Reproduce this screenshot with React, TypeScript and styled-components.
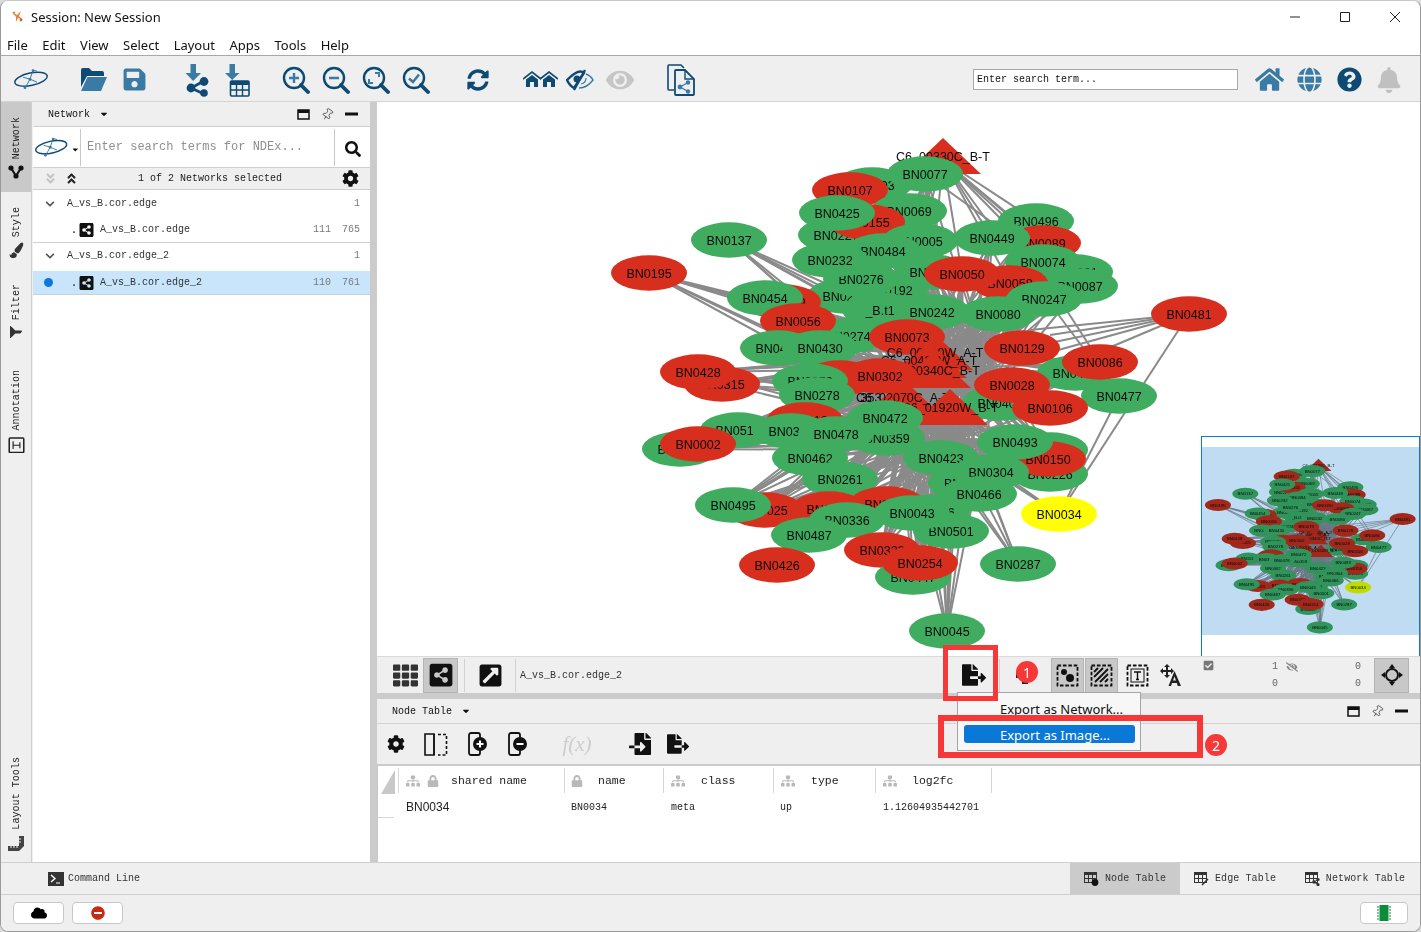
import React from 'react';
import styled, { createGlobalStyle } from 'styled-components';
import {
  FaSave, FaHome, FaGlobe, FaQuestionCircle, FaBell, FaEyeSlash, FaEye, FaSearch, FaCog,
  FaShareAltSquare, FaSyncAlt, FaFileExport, FaFileImport, FaTh, FaExternalLinkSquareAlt,
  FaLock, FaSitemap, FaCloud, FaMinusCircle, FaCheckSquare, FaFilter, FaPaintBrush,
  FaCaretDown, FaChevronDown, FaAngleDoubleDown, FaAngleDoubleUp,
} from 'react-icons/fa';
import { Pin } from 'lucide-react';

const MONO = `"Liberation Mono", "DejaVu Sans Mono", monospace`;
const UI = `"Noto Sans", "Open Sans", sans-serif`;
const SANS = `"Liberation Sans", Arial, sans-serif`;
const DARK = '#0e4a73';
const MID = '#3a7ba6';

const Global = createGlobalStyle`
  html, body { margin: 0; padding: 0; background: #dcdcdc; }
  #root { width: 1421px; height: 932px; }
  * { box-sizing: border-box; }
`;

const Win = styled.div`
  width: 1421px; height: 932px; display: flex; flex-direction: column; overflow: hidden; position: relative;
  background: #efefef; border: 1px solid #9a9a9a; border-top-color: #c8c8c8; border-radius: 8px;
`;
const TitleBar = styled.div`
  height: 32px; flex: none; background: #fff; display: flex; align-items: center; padding-left: 10px; padding-bottom: 1px;
  font: 13px ${UI}; color: #111;
`;
const TitleText = styled.span` margin-left: 7px; `;
const WinCtl = styled.div` margin-left: auto; display: flex; `;
const WinBtn = styled.div` width: 50px; height: 31px; display: flex; align-items: center; justify-content: center; `;
const MenuBar = styled.div`
  height: 23px; flex: none; background: #fff; border-bottom: 1px solid #a8a8a8; display: flex; align-items: center;
  padding-left: 6px; padding-top: 1px; gap: 14.5px; font: 13px ${UI}; color: #111;
`;
const Toolbar = styled.div`
  height: 46px; flex: none; background: #efefef; border-bottom: 1px solid #d4d4d4; display: flex; align-items: center;
  padding-left: 12px; padding-right: 11px; padding-top: 2px;
`;
const ToolGroup = styled.div<{ $ml: number }>` display: flex; margin-left: ${p => p.$ml}px; `;
const Slot = styled.div<{ $w?: number; $c?: string }>`
  width: ${p => p.$w ?? 40}px; height: 40px; display: flex; align-items: center; justify-content: center; color: ${p => p.$c ?? DARK};
`;
const SearchBox = styled.div`
  margin-left: auto; width: 265px; height: 21px; margin-bottom: 1px; background: #fff; border: 1px solid #a9a9a9; font: 10px ${MONO}; color: #111;
  display: flex; align-items: center; padding-left: 3px; margin-right: 11px;
`;
const Main = styled.div` flex: 1; display: flex; min-height: 0; `;
const TabStrip = styled.div`
  width: 31px; flex: none; background: #efefef; border-right: 1px solid #cfcfcf; display: flex; flex-direction: column;
`;
const SideTab = styled.div<{ $active?: boolean; $h: number; $pt: number; $auto?: boolean }>`
  height: ${p => p.$h}px; padding-top: ${p => p.$pt}px; flex: none; display: flex; flex-direction: column; align-items: center; gap: 6px;
  background: ${p => (p.$active ? '#c9c9c9' : 'transparent')}; margin-top: ${p => (p.$auto ? 'auto' : 0)};
`;
const SideLabel = styled.span`
  writing-mode: vertical-rl; transform: rotate(180deg); font: 10px ${MONO}; color: #222; white-space: pre; letter-spacing: 0.05px;
`;
const NetPanel = styled.div`
  width: 337px; flex: none; margin-left: 1px; background: #fff; display: flex; flex-direction: column;
`;
const PanelHead = styled.div`
  height: 25px; flex: none; background: #efefef; border-bottom: 1px solid #cfcfcf; display: flex; align-items: center;
  padding-left: 15px; padding-right: 7px; font: 10px ${MONO}; color: #111;
`;
const Caret = styled.span` margin-left: 9px; display: inline-flex; `;
const HeadIcons = styled.div` margin-left: auto; display: flex; align-items: center; `;
const HeadIcon = styled.div` width: 24px; display: flex; justify-content: center; align-items: center; `;
const SearchRow = styled.div`
  height: 41px; flex: none; background: #fff; display: flex; align-items: center; border-bottom: 1px solid #cfcfcf;
`;
const LogoCell = styled.div`
  width: 48px; height: 37px; flex: none; border-right: 1px solid #c8c8c8; display: flex; align-items: center; padding-left: 1px; gap: 3px;
`;
const NdexInput = styled.div`
  flex: 1; height: 37px; display: flex; align-items: center; padding-left: 6px; padding-bottom: 1px; font: 12px ${MONO}; color: #8f8f8f;
`;
const SearchBtn = styled.div`
  width: 36px; height: 37px; flex: none; border-left: 1px solid #c8c8c8; display: flex; align-items: center; justify-content: center; padding-top: 3px;
`;
const SelectRow = styled.div`
  height: 22px; flex: none; background: #efefef; border-bottom: 1px solid #cfcfcf; display: flex; align-items: center; position: relative;
  padding-left: 11px; gap: 8px; font: 10px ${MONO}; color: #222;
`;
const SelectText = styled.span` margin-left: 52px; `;
const GearSlot = styled.span` margin-left: auto; margin-right: 11px; display: inline-flex; `;
const TreeRow = styled.div<{ $h: number; $line?: boolean; $sel?: boolean; $pb?: number }>`
  height: ${p => p.$h}px; flex: none; display: flex; align-items: center; font: 10px ${MONO}; color: #333; padding-bottom: ${p => p.$pb ?? 0}px;
  background: ${p => (p.$sel ? '#c9e5fc' : '#fff')}; border-bottom: ${p => (p.$line ? '1px solid #cfcfcf' : 'none')};
`;
const Chevron = styled.span` width: 34px; padding-left: 12px; flex: none; display: inline-flex; color: #555; `;
const Dot = styled.span<{ $on?: boolean }>`
  width: 9px; height: 9px; margin-left: 11px; border-radius: 50%; background: ${p => (p.$on ? '#0a78dd' : 'transparent')}; flex: none;
`;
const Bullet = styled.span` margin-left: 18px; width: 8px; flex: none; font-weight: bold; padding-top: 2px; `;
const NetIcon = styled.span` width: 15px; height: 15px; margin-right: 6px; flex: none; display: inline-flex; `;
const Count = styled.span<{ $w: number }>` width: ${p => p.$w}px; text-align: right; flex: none; color: #7a7a7a; `;
const Spacer = styled.span` flex: 1; `;
const RightPad = styled.span` flex: none; width: 10px; `;
const Sash = styled.div<{ $w?: number; $h?: number }>`
  flex: none; background: #cbcbcb; width: ${p => (p.$w ? `${p.$w}px` : 'auto')}; height: ${p => (p.$h ? `${p.$h}px` : 'auto')};
`;
const Right = styled.div` flex: 1; min-width: 0; display: flex; flex-direction: column; `;
const Canvas = styled.div` height: 554px; flex: none; background: #fff; position: relative; `;
const NetSvg = styled.svg` display: block; width: 100%; height: 100%; `;
const Minimap = styled.svg`
  position: absolute; right: 0; top: 334px; width: 219px; height: 220px; background: #fff; border: 1px solid #0b7ad8; border-bottom: none;
`;
const NetBar = styled.div`
  height: 37px; flex: none; background: #efefef; border-top: 1px solid #dadada; display: flex; align-items: center; padding-left: 11px; font: 10px ${MONO}; color: #333;
`;
const BarBtn = styled.div<{ $w?: number; $active?: boolean; $ml?: number }>`
  width: ${p => p.$w ?? 34}px; height: 35px; flex: none; margin-left: ${p => p.$ml ?? 0}px; display: flex; align-items: center; justify-content: center; color: #111;
  background: ${p => (p.$active ? '#c8c8c8' : 'transparent')}; border: 1px solid ${p => (p.$active ? '#b4b4b4' : 'transparent')};
`;
const Sep = styled.div<{ $ml?: number }>` width: 1px; height: 33px; background: #d2d2d2; flex: none; margin-left: ${p => p.$ml ?? 0}px; `;
const NetTitle = styled.span` margin-left: 4px; `;
const Stats = styled.div`
  display: grid; grid-template-columns: 60px 20px 63px; grid-auto-rows: 17px; margin-left: 3px; width: 143px; font: 10px ${MONO}; color: #666; align-items: center;
`;
const StatCell = styled.span` text-align: right; display: flex; justify-content: flex-end; `;
const CheckCell = styled.div` margin-left: 13px; width: 12px; align-self: flex-start; padding-top: 3px; color: #777; display: flex; `;
const TableHead = styled.div`
  height: 25px; flex: none; border-bottom: 1px solid #d2d2d2; background: #efefef; display: flex; align-items: center; padding-left: 15px; padding-right: 7px;
  font: 10px ${MONO}; color: #111;
`;
const TableTools = styled.div` height: 40px; flex: none; background: #efefef; display: flex; align-items: center; padding-left: 7px; `;
const Tool = styled.div<{ $w?: number; $ml?: number }>`
  width: ${p => p.$w ?? 24}px; margin-left: ${p => p.$ml ?? 0}px; display: flex; justify-content: center; align-items: center; color: #111; flex: none;
`;
const Fx = styled.span` font: italic 21px "Liberation Serif", serif; color: #cdcdcd; `;
const Grid = styled.div`
  flex: 1; background: #fff; display: grid; grid-template-columns: 20px 166px 99px 110px 102px 116px 1fr; grid-template-rows: 28px 28px 1fr; min-height: 0;
  border-left: 1px solid #c8c8c8;
`;
const Corner = styled.div` display: flex; align-items: flex-end; padding: 2px 0 0 3px; `;
const Th = styled.div<{ $pad: number; $gap: number }>`
  border-left: 1px solid #d6d6d6; margin-top: 2px; height: 25px; display: flex; align-items: center; padding-left: ${p => p.$pad}px; gap: 4px;
  font: 11.5px ${MONO}; color: #222;
  & > span { margin-left: ${p => p.$gap}px; }
  & svg { color: #b9b9b9; }
`;
const Td = styled.div<{ $sans?: boolean; $pad?: number }>`
  display: flex; align-items: center; padding-left: ${p => p.$pad ?? 8}px; color: #222; padding-bottom: 2px;
  font: ${p => (p.$sans ? `12px ${SANS}` : `10px ${MONO}`)};
`;
const RowHead = styled.div` border-bottom: 1px solid #d8d8d8; margin: 0 4px 4px 0; `;
const Filler = styled.div` grid-column: 1 / -1; `;
const BottomBar = styled.div`
  height: 33px; flex: none; border-top: 1px solid #cfcfcf; background: #efefef; border-bottom: 1px solid #cfcfcf; display: flex; align-items: stretch; padding-left: 47px;
  font: 10px ${MONO}; color: #333;
`;
const CmdLine = styled.div` display: flex; align-items: center; gap: 4px; `;
const BottomTab = styled.div<{ $w: number; $active?: boolean; $ml?: string }>`
  width: ${p => p.$w}px; margin-left: ${p => p.$ml ?? 0}; flex: none; display: flex; align-items: center; justify-content: center; gap: 6px; letter-spacing: 0.1px;
  background: ${p => (p.$active ? '#cbcbcb' : 'transparent')};
`;
const StatusBar = styled.div` height: 36px; flex: none; display: flex; align-items: center; padding: 0 12px; gap: 8px; background: #efefef; padding-bottom: 1px; `;
const StatusBtn = styled.div<{ $auto?: boolean; $w?: number }>`
  width: ${p => p.$w ?? 51}px; height: 22px; background: #fff; border: 1px solid #c8c8c8; border-radius: 4px; display: flex; align-items: center; justify-content: center;
  margin-left: ${p => (p.$auto ? 'auto' : 0)};
`;
const Menu = styled.div`
  position: absolute; left: 956px; top: 691px; width: 184px; height: 59px; background: #f7f7f7; border: 1px solid #a5a5a5;
  padding: 5px 5px 0 6px; font: 13px ${UI}; color: #111;
`;
const MenuItem = styled.div<{ $sel?: boolean }>`
  height: ${p => (p.$sel ? 18 : 24)}px; margin-top: ${p => (p.$sel ? 3 : 0)}px; display: flex; align-items: center; padding-left: 36px; border-radius: 3px;
  padding-bottom: ${p => (p.$sel ? 0 : 3)}px; padding-top: ${p => (p.$sel ? 1 : 0)}px;
  background: ${p => (p.$sel ? '#0a78d7' : 'transparent')}; color: ${p => (p.$sel ? '#fff' : '#111')};
`;
const RedBox = styled.div<{ $l: number; $t: number; $w: number; $h: number; $b: number }>`
  position: absolute; left: ${p => p.$l}px; top: ${p => p.$t}px; width: ${p => p.$w}px; height: ${p => p.$h}px; border: ${p => p.$b}px solid #f73838;
`;
const Badge = styled.div<{ $l: number; $t: number }>`
  position: absolute; left: ${p => p.$l}px; top: ${p => p.$t}px; width: 22px; height: 22px; border-radius: 50%; background: #f73838; color: #fff;
  font: 14px ${UI}; display: flex; align-items: center; justify-content: center;
`;

/* ---------- drawn icons ---------- */
const Logo = ({ w = 36 }: { w?: number }) => (
  <svg width={w} height={w * 0.62} viewBox="0 0 36 22" fill="none">
    <ellipse cx="18" cy="11" rx="16.5" ry="6.2" transform="rotate(-12 18 11)" stroke={DARK} strokeWidth="1.5" />
    <path d="M20 2 L17 11 L12 20 M17 11 L24 14 M17 11 L10 9 M20 2 L24 3" stroke={MID} strokeWidth="1" />
    <circle cx="20" cy="2.5" r="1.4" fill={MID} /><circle cx="12" cy="19.5" r="1.4" fill={MID} /><circle cx="17" cy="11" r="1.5" fill={MID} />
  </svg>
);
const AppMark = () => (
  <svg width="13" height="13" viewBox="0 0 13 13">
    <path d="M1 2 L6 5 L10 1 L8 6 L12 10 L7 8 L5 12 L5 7 Z" fill="#e8843c" />
    <circle cx="3" cy="3" r="1.4" fill="#c9a06a" /><circle cx="10" cy="10" r="1.4" fill="#d65c3a" />
  </svg>
);
const Folder = () => (
  <svg width="28" height="25" viewBox="0 0 28 25">
    <path d="M1 3 Q1 1 3 1 H9 L12 4 H22 Q24 4 24 6 V9 H7 L1 20 Z" fill={DARK} />
    <path d="M7.5 10 H27 L21 24 H1 Z" fill={MID} />
  </svg>
);
const Mag = ({ kind }: { kind: 'plus' | 'minus' | 'fit' | 'check' }) => (
  <svg width="28" height="28" viewBox="0 0 28 28" fill="none">
    <circle cx="12" cy="12" r="10" stroke={DARK} strokeWidth="2.4" fill="none" />
    <path d="M19 19 L26 26" stroke={DARK} strokeWidth="3.8" strokeLinecap="round" />
    {kind === 'plus' && <path d="M12 7 V17 M7 12 H17" stroke={MID} strokeWidth="2.4" />}
    {kind === 'minus' && <path d="M7 12 H17" stroke={MID} strokeWidth="2.4" />}
    {kind === 'fit' && <path d="M13 7 H17 V11 M11 17 H7 V13" stroke={MID} strokeWidth="2" />}
    {kind === 'check' && <path d="M7 12.5 L11 16 L17 8.5" stroke={MID} strokeWidth="2.6" />}
  </svg>
);
const DownShare = () => (
  <svg width="26" height="34" viewBox="0 0 26 34">
    <path d="M6.5 1 H12 V10 H17 L9.2 18 L1.5 10 H6.5 Z" fill={MID} />
    <path d="M7 25 L20 18 M7 25 L20 31" stroke={DARK} strokeWidth="2.6" />
    <circle cx="7" cy="25" r="4.4" fill={DARK} /><circle cx="20" cy="18.5" r="4.4" fill={DARK} /><circle cx="20" cy="30" r="3.8" fill={DARK} />
  </svg>
);
const DownTable = () => (
  <svg width="26" height="34" viewBox="0 0 26 34">
    <path d="M5.5 1 H11 V10 H15.5 L8.2 17 L1 10 H5.5 Z" fill={MID} />
    <rect x="6.5" y="18" width="18.5" height="15" rx="1" fill="#efefef" stroke={DARK} strokeWidth="1.6" />
    <rect x="6.5" y="18" width="18.5" height="4" fill={DARK} />
    <path d="M7 27 H25 M12.5 22 V33 M18.5 22 V33" stroke={DARK} strokeWidth="1.4" />
  </svg>
);
const Homes = () => (
  <svg width="35" height="17" viewBox="0 0 35 17">
    {[0, 17].map(x => (
      <g key={x} transform={`translate(${x} 0)`}>
        <path d="M0 8 L9 1 L18 8" fill="none" stroke={DARK} strokeWidth="1.6" />
        <path d="M3 8.5 L9 4 L15 8.5 V16 H11 V11 H7 V16 H3 Z" fill={DARK} />
      </g>
    ))}
  </svg>
);
const EyeSlashIcon = () => (
  <svg width="28" height="22" viewBox="0 0 28 22" fill="none">
    <path d="M1 11 Q13 -1 18 4 L8 19 Q4 17 1 11 Z" stroke={DARK} strokeWidth="2.4" fill="none" />
    <circle cx="11" cy="10" r="3.5" fill={DARK} />
    <path d="M19 1 L8 21" stroke={DARK} strokeWidth="2.4" />
    <path d="M20 5 Q25 7 27 11 Q21 19 13 19" stroke={MID} strokeWidth="1.4" /><path d="M20 9 Q20 14 15 15" stroke={MID} strokeWidth="1.2" />
  </svg>
);
const DocsShare = () => (
  <svg width="28" height="32" viewBox="0 0 28 32" fill="none">
    <path d="M7 26 H2 Q1 26 1 25 V2 Q1 1 2 1 H14 L17 4" stroke={DARK} strokeWidth="1.6" />
    <path d="M8 7 Q8 6 9 6 H18 L27 15 V30 Q27 31 26 31 H9 Q8 31 8 30 Z" stroke={DARK} strokeWidth="1.8" fill="#efefef" />
    <path d="M18 6 V15 H27" stroke={DARK} strokeWidth="1.4" />
    <path d="M13 23 L21 18.5 M13 23 L21 27.5" stroke={MID} strokeWidth="1.4" />
    <circle cx="13" cy="23" r="2.4" fill={MID} /><circle cx="21" cy="18.5" r="2.2" fill={MID} /><circle cx="21" cy="27.5" r="2.2" fill={MID} />
  </svg>
);
const NetTabIcon = () => (
  <svg width="16" height="14" viewBox="0 0 16 14">
    <path d="M3 3 L8 11 L13 3 L8 11" stroke="#111" strokeWidth="2" fill="none" />
    <circle cx="3" cy="3" r="2.6" fill="#111" /><circle cx="13" cy="3" r="2.6" fill="#111" /><circle cx="8" cy="11" r="2.6" fill="#111" />
  </svg>
);
const AnnoIcon = () => (
  <svg width="17" height="17" viewBox="0 0 17 17" fill="none">
    <rect x="1" y="1" width="15" height="15" rx="1" stroke="#222" strokeWidth="1.6" />
    <path d="M5 4.5 V12.5 M5 8.5 H12 M12 5.5 V11.5" stroke="#222" strokeWidth="1.2" />
  </svg>
);
const RulerIcon = () => (
  <svg width="17" height="16" viewBox="0 0 17 16">
    <path d="M16 0 V10 L11 15 L0 15 V10 H11 V0 Z" fill="#444" /><path d="M3 10 V12 M6 10 V12 M9 10 V12 M11 3 H13 M11 6 H13" stroke="#eee" />
  </svg>
);
const MaxIcon = () => (
  <svg width="13" height="11" viewBox="0 0 13 11" fill="none"><rect x="1" y="1" width="11" height="9" stroke="#111" strokeWidth="1.5" /><rect x="1" y="1" width="11" height="3" fill="#111" /></svg>
);
const MinIcon = () => <svg width="13" height="4" viewBox="0 0 13 4"><rect width="13" height="3" y="0.5" fill="#111" /></svg>;
const PanelIcons = () => (
  <HeadIcons>
    <HeadIcon><MaxIcon /></HeadIcon>
    <HeadIcon><Pin size={13} strokeWidth={1.3} color="#333" style={{ transform: 'rotate(35deg)' }} /></HeadIcon>
    <HeadIcon><MinIcon /></HeadIcon>
  </HeadIcons>
);
const BoxIcon = ({ kind }: { kind: 'node' | 'edge' | 'text' }) => (
  <svg width="23" height="23" viewBox="0 0 23 23" fill="none">
    <rect x="1.5" y="1.5" width="20" height="20" stroke="#111" strokeWidth="1.8" strokeDasharray="3.6 1.8" />
    {kind === 'node' && <g fill="#111"><circle cx="8" cy="8" r="3" /><circle cx="14" cy="14" r="4" /></g>}
    {kind === 'edge' && <path d="M4 8 L8 4 M4 13 L13 4 M5 18 L18 5 M10 18 L18 10 M15 18 L18 15" stroke="#111" strokeWidth="1.8" />}
    {kind === 'text' && <g><rect x="5" y="5" width="13" height="13" stroke="#111" strokeWidth="1" /><path d="M8 8 H15 M11.5 8 V15.5 M10 15.5 H13" stroke="#111" strokeWidth="1.4" /></g>}
  </svg>
);
const MoveA = () => (
  <svg width="24" height="24" viewBox="0 0 24 24">
    <path d="M7 1 L10 4 H8 V7 H11 V5 L14 8 L11 11 V9 H8 V12 H10 L7 15 L4 12 H6 V9 H3 V11 L0 8 L3 5 V7 H6 V4 H4 Z" fill="#222" />
    <path d="M14.5 8 L21 23 H17.8 L16.8 20 H12 L11 23 H8.5 Z M15.9 17.6 L14.5 13.4 L13 17.6 Z" fill="#222" />
  </svg>
);
const AddIcon = () => (
  <svg width="20" height="20" viewBox="0 0 20 20"><path d="M7 1 H13 V7 H19 V13 H13 V19 H7 V13 H1 V7 H7 Z" fill="#222" /></svg>
);
const CrossIcon = () => (
  <svg width="22" height="22" viewBox="0 0 22 22" fill="none">
    <circle cx="11" cy="11" r="6" stroke="#111" strokeWidth="2" />
    <path d="M11 0 L14 4 H8 Z M11 22 L14 18 H8 Z M0 11 L4 8 V14 Z M22 11 L18 8 V14 Z" fill="#111" />
  </svg>
);
const ColsIcon = () => (
  <svg width="24" height="23" viewBox="0 0 24 23" fill="none">
    <path d="M10 1 H1 V22 H10 Z" stroke="#111" strokeWidth="1.6" /><path d="M10 1 V22" stroke="#111" strokeWidth="1.4" />
    <path d="M14 1.5 H22.5 V22 H14" stroke="#111" strokeWidth="1.6" strokeDasharray="3 2" />
  </svg>
);
const ColOp = ({ plus }: { plus?: boolean }) => (
  <svg width="20" height="24" viewBox="0 0 20 24" fill="none">
    <rect x="1" y="1" width="11" height="22" rx="2" stroke="#111" strokeWidth="1.8" />
    <circle cx="12" cy="12" r="7" fill="#111" />
    <path d={plus ? 'M8.5 12 H15.5 M12 8.5 V15.5' : 'M8.5 12 H15.5'} stroke="#fff" strokeWidth="2" />
  </svg>
);
const TermIcon = () => (
  <svg width="16" height="14" viewBox="0 0 16 14"><rect width="16" height="14" fill="#333" /><path d="M3 3 L7 6.5 L3 10" stroke="#fff" strokeWidth="1.4" fill="none" /><path d="M8 11 H12" stroke="#fff" strokeWidth="1.2" /></svg>
);
const TableGlyph = ({ kind }: { kind: 'node' | 'edge' | 'net' }) => (
  <svg width="15" height="14" viewBox="0 0 15 14" fill="none">
    <rect x="0.5" y="0.5" width="12" height="10" stroke="#333" fill="none" />
    <rect x="0.5" y="0.5" width="12" height="2.5" fill="#333" />
    <path d="M0 6.5 H13 M4.5 3 V11 M8.5 3 V11" stroke="#333" />
    {kind === 'node' && <circle cx="11" cy="10.5" r="3.4" fill="#111" />}
    {kind === 'edge' && <path d="M8 13 L14 7" stroke="#333" strokeWidth="1.6" />}
    {kind === 'net' && <g fill="#333"><circle cx="9" cy="10" r="1.8" /><circle cx="13" cy="7.5" r="1.6" /><circle cx="13" cy="12.5" r="1.6" /><path d="M9 10 L13 7.5 M9 10 L13 12.5" stroke="#333" /></g>}
  </svg>
);
const Chip = () => (
  <svg width="14" height="16" viewBox="0 0 14 16">
    <rect x="2.5" y="0" width="9" height="16" fill="#0b8c3a" />
    <path d="M0 2 H14 M0 5 H14 M0 8 H14 M0 11 H14 M0 14 H14" stroke="#0b8c3a" strokeWidth="1" strokeDasharray="2 10" />
  </svg>
);
const WinGlyph = ({ d }: { d: string }) => <svg width="12" height="12" viewBox="0 0 12 12" fill="none"><path d={d} stroke="#222" strokeWidth="1" /></svg>;

/* ---------- network data: positions are the free-canvas content ---------- */
type N = [string, number, number, 'g' | 'r' | 'y' | 't'];
const nodes: N[] = [
  ['C6_00330C_B-T', 943, 156, 't'],
  ['BN0003', 872, 185, 'g'], ['BN0077', 925, 174, 'g'], ['BN0107', 850, 190, 'r'],
  ['BN0069', 909, 211, 'g'], ['BN0227', 836, 235, 'g'], ['BN0155', 867, 222, 'r'],
  ['BN0425', 837, 213, 'g'], ['BN0005', 920, 241, 'g'], ['BN0496', 1036, 221, 'g'], ['BN0484', 883, 251, 'g'],
  ['BN0089', 1043, 243, 'r'], ['BN0449', 992, 238, 'g'],
  ['BN0021', 1075, 272, 'g'], ['BN0087', 1080, 286, 'g'], ['BN0074', 1043, 262, 'g'],
  ['BN0277', 845, 296, 'g'], ['BN0192', 890, 290, 'g'], ['BN0276', 861, 279, 'g'], ['BN0232', 830, 260, 'g'],
  ['BN0137', 729, 240, 'g'], ['BN0195', 649, 273, 'r'],
  ['BN0331', 932, 272, 'g'], ['BN0058', 1010, 283, 'r'], ['BN0050', 962, 274, 'r'],
  ['BN0339', 783, 302, 'r'], ['BN0454', 765, 298, 'g'], ['_B.t1', 880, 310, 'g'], ['BN0274', 848, 336, 'g'], ['BN0056', 798, 321, 'r'],
  ['BN0408', 778, 348, 'g'], ['BN0430', 820, 348, 'g'],
  ['BN0247', 1044, 299, 'g'], ['BN0080', 998, 314, 'g'], ['BN0242', 932, 312, 'g'],
  ['BN0481', 1189, 314, 'r'], ['BN0073', 907, 337, 'r'],
  ['C6_00420W_A-T', 935, 352, 't'], ['C6_00420W_A-T', 929, 360, 't'], ['BN0129', 1022, 348, 'r'],
  ['BN0407', 1075, 373, 'g'], ['BN0086', 1100, 362, 'r'], ['BN0477', 1119, 396, 'g'],
  ['BN0315', 722, 384, 'r'], ['BN0428', 698, 372, 'r'],
  ['C6_00340C_B-T', 933, 370, 't'], ['BN0400', 1000, 403, 'g'], ['BN0028', 1012, 385, 'r'], ['BN0106', 1050, 408, 'r'],
  ['BN0322', 840, 378, 'r'], ['BN0302', 880, 376, 'r'], ['BN0370', 810, 381, 'g'], ['BN0278', 817, 395, 'g'],
  ['C6_02070C_A-T', 903, 397, 't'], ['353', 871, 397, 't'], ['C6_01920W_B-T', 950, 407, 't'],
  ['BN0513', 738, 430, 'g'], ['BN0035', 680, 449, 'g'], ['BN0002', 698, 444, 'r'], ['BN0318', 805, 420, 'r'],
  ['BN0317', 791, 431, 'g'], ['BN0359', 887, 438, 'g'], ['BN0472', 885, 418, 'g'], ['BN0478', 836, 434, 'g'],
  ['BN0462', 810, 458, 'g'], ['BN0261', 840, 479, 'g'],
  ['BN0489', 1050, 450, 'g'], ['BN0226', 1050, 474, 'g'], ['BN0150', 1048, 459, 'r'], ['BN0423', 941, 458, 'g'],
  ['BN0493', 1015, 442, 'g'], ['BN0211', 966, 483, 'g'], ['BN0304', 991, 472, 'g'], ['BN0466', 979, 494, 'g'],
  ['BN0025', 765, 510, 'r'], ['BN0495', 733, 505, 'g'], ['BN0301', 829, 509, 'r'], ['BN0380', 887, 504, 'r'],
  ['BN0336', 847, 520, 'g'], ['BN0487', 809, 535, 'g'], ['BN0506', 932, 512, 'g'], ['BN0501', 951, 531, 'g'], ['BN0043', 912, 513, 'g'],
  ['BN0323', 882, 550, 'r'], ['BN0426', 777, 565, 'r'], ['BN0447', 913, 577, 'g'], ['BN0254', 920, 563, 'r'],
  ['BN0287', 1018, 564, 'g'], ['BN0034', 1059, 514, 'y'], ['BN0045', 947, 631, 'g'],
];
const hubs: [number, number][] = [[952, 352], [964, 368], [905, 397], [938, 408], [930, 352], [985, 355], [955, 440]];
const fill = { g: '#3fac5f', r: '#d82e1d', y: '#ffff00', t: '#d82e1d' };
const skip = new Set(['BN0034', 'BN0481', 'BN0477', 'BN0287']);
const edges: number[][] = [];
nodes.forEach(([label, x, y, k]) => {
  if (k === 't' || skip.has(label)) return;
  hubs.forEach(([hx, hy]) => edges.push([x, y, hx, hy]));
  if (y < 300 && x > 800) edges.push([x, y, 943, 160]);
  if (y > 420) { edges.push([x, y, 900, 450]); edges.push([x, y, 985, 440]); }
});
edges.push(
  [1189, 314, 1059, 514], [1189, 314, 1050, 335], [1189, 314, 1040, 345], [1189, 314, 1030, 330], [1189, 314, 1080, 360], [1189, 314, 1040, 355], [1119, 396, 1059, 514],
  [925, 174, 1030, 250], [1059, 514, 1000, 472], [1059, 514, 1005, 478], [1059, 514, 990, 470],
  [1018, 564, 985, 480], [1018, 564, 975, 480], [1018, 564, 990, 490], [1018, 564, 968, 490], [1018, 564, 960, 485],
  [1100, 362, 1060, 300], [1119, 396, 1040, 290],
);

const Graph = () => (
  <>
    <g stroke="#8a8a8a" strokeWidth="2">
      {edges.map((e, i) => <line key={i} x1={e[0]} y1={e[1]} x2={e[2]} y2={e[3]} />)}
    </g>
    {nodes.map(([label, x, y, k], i) => (
      <g key={i}>
        {k === 't'
          ? label !== '353' && <polygon points={`${x},${y - 18} ${x + 38},${y + 18} ${x - 38},${y + 18}`} fill={fill.t} />
          : <ellipse cx={x} cy={y} rx="38" ry="17.7" fill={fill[k]} />}
        <text x={x} y={y + 4.6} textAnchor="middle" fontFamily={SANS} fontSize="12.5" fill="#0a0a0a">{label}</text>
      </g>
    ))}
  </>
);

export default function App() {
  return (
    <Win>
      <Global />
      <TitleBar>
        <AppMark />
        <TitleText>Session: New Session</TitleText>
        <WinCtl>
          <WinBtn><WinGlyph d="M1 6 H11" /></WinBtn>
          <WinBtn><WinGlyph d="M1.5 1.5 H10.5 V10.5 H1.5 Z" /></WinBtn>
          <WinBtn><WinGlyph d="M1 1 L11 11 M11 1 L1 11" /></WinBtn>
        </WinCtl>
      </TitleBar>
      <MenuBar>
        {['File', 'Edit', 'View', 'Select', 'Layout', 'Apps', 'Tools', 'Help'].map(m => <span key={m}>{m}</span>)}
      </MenuBar>
      <Toolbar>
        <Slot $w={36}><Logo /></Slot>
        <ToolGroup $ml={25}><Slot><Folder /></Slot><Slot $c={MID}><FaSave size={25} /></Slot></ToolGroup>
        <ToolGroup $ml={23}><Slot><DownShare /></Slot><Slot><DownTable /></Slot></ToolGroup>
        <ToolGroup $ml={19}><Slot><Mag kind="plus" /></Slot><Slot><Mag kind="minus" /></Slot><Slot><Mag kind="fit" /></Slot><Slot><Mag kind="check" /></Slot></ToolGroup>
        <ToolGroup $ml={22}><Slot><FaSyncAlt size={22} /></Slot></ToolGroup>
        <ToolGroup $ml={22}><Slot><Homes /></Slot><Slot><EyeSlashIcon /></Slot><Slot $c="#c6c6c6"><FaEye size={28} /></Slot></ToolGroup>
        <ToolGroup $ml={21}><Slot><DocsShare /></Slot></ToolGroup>
        <SearchBox>Enter search term...</SearchBox>
        <Slot $c={MID}><FaHome size={29} /></Slot>
        <Slot $c={MID}><FaGlobe size={25} /></Slot>
        <Slot><FaQuestionCircle size={25} /></Slot>
        <Slot $c="#c0c0c0"><FaBell size={26} /></Slot>
      </Toolbar>
      <Main>
        <TabStrip>
          <SideTab $active $h={90} $pt={15}><SideLabel>Network</SideLabel><NetTabIcon /></SideTab>
          <SideTab $h={76} $pt={15}><SideLabel>Style</SideLabel><FaPaintBrush size={15} color="#333" style={{ transform: 'rotate(-5deg)' }} /></SideTab>
          <SideTab $h={85} $pt={16}><SideLabel>Filter</SideLabel><FaFilter size={12} color="#333" style={{ transform: 'rotate(-90deg)' }} /></SideTab>
          <SideTab $h={100} $pt={17}><SideLabel>Annotation</SideLabel><AnnoIcon /></SideTab>
          <SideTab $auto $h={105}><SideLabel>Layout Tools</SideLabel><RulerIcon /></SideTab>
        </TabStrip>
        <NetPanel>
          <PanelHead>Network<Caret><FaCaretDown size={10} color="#111" /></Caret><PanelIcons /></PanelHead>
          <SearchRow>
            <LogoCell><Logo /><FaCaretDown size={9} color="#111" style={{ marginTop: 5 }} /></LogoCell>
            <NdexInput>Enter search terms for NDEx...</NdexInput>
            <SearchBtn><FaSearch size={16} color="#111" /></SearchBtn>
          </SearchRow>
          <SelectRow>
            <FaAngleDoubleDown size={13} color="#c4c4c4" />
            <FaAngleDoubleUp size={13} color="#222" />
            <SelectText>1 of 2 Networks selected</SelectText>
            <GearSlot><FaCog size={17} color="#111" /></GearSlot>
          </SelectRow>
          <TreeRow $h={27}><Chevron><FaChevronDown size={10} /></Chevron>A_vs_B.cor.edge<Spacer /><Count $w={14}>1</Count><RightPad /></TreeRow>
          <TreeRow $h={26} $line><Dot /><Bullet>.</Bullet><NetIcon><FaShareAltSquare size={16} color="#111" /></NetIcon>A_vs_B.cor.edge<Spacer /><Count $w={18}>111</Count><Count $w={29}>765</Count><RightPad /></TreeRow>
          <TreeRow $h={28} $pb={3}><Chevron><FaChevronDown size={10} /></Chevron>A_vs_B.cor.edge_2<Spacer /><Count $w={14}>1</Count><RightPad /></TreeRow>
          <TreeRow $h={23} $sel><Dot $on /><Bullet>.</Bullet><NetIcon><FaShareAltSquare size={16} color="#111" /></NetIcon>A_vs_B.cor.edge_2<Spacer /><Count $w={18}>110</Count><Count $w={29}>761</Count><RightPad /></TreeRow>
          <TreeRow $h={1} $line />
        </NetPanel>
        <Sash $w={7} />
        <Right>
          <Canvas>
            <NetSvg viewBox="377 102 1043 554"><Graph /></NetSvg>
            <Minimap viewBox="0 0 217 219">
              <g transform="translate(-206 -25.4) scale(0.342)"><Graph /></g>
              <rect x="0" y="10" width="218" height="188" fill="#bfdcf3" style={{ mixBlendMode: 'multiply' }} />
            </Minimap>
          </Canvas>
          <NetBar>
            <BarBtn><FaTh size={25} color="#333" /></BarBtn>
            <BarBtn $active $ml={1} $w={35}><FaShareAltSquare size={26} color="#111" /></BarBtn>
            <Sep $ml={6} />
            <BarBtn $ml={8}><FaExternalLinkSquareAlt size={25} /></BarBtn>
            <Sep $ml={8} />
            <NetTitle>A_vs_B.cor.edge_2</NetTitle>
            <BarBtn $ml={335} $w={34}><FaFileExport size={24} /></BarBtn>
            <Sep $ml={8} />
            <BarBtn $ml={7} $w={36}><AddIcon /></BarBtn>
            <BarBtn $active $ml={8} $w={33}><BoxIcon kind="node" /></BarBtn>
            <BarBtn $active $ml={1} $w={33}><BoxIcon kind="edge" /></BarBtn>
            <BarBtn $ml={2} $w={34}><BoxIcon kind="text" /></BarBtn>
            <BarBtn $w={36}><MoveA /></BarBtn>
            <CheckCell><FaCheckSquare size={11} /></CheckCell>
            <Stats>
              <StatCell>1</StatCell><StatCell><FaEyeSlash size={12} color="#888" /></StatCell><StatCell>0</StatCell>
              <StatCell>0</StatCell><StatCell /><StatCell>0</StatCell>
            </Stats>
            <BarBtn $active $w={35} $ml={13}><CrossIcon /></BarBtn>
          </NetBar>
          <Sash $h={6} />
          <TableHead>Node Table<Caret><FaCaretDown size={10} color="#111" /></Caret><PanelIcons /></TableHead>
          <TableTools>
            <Tool $w={24}><FaCog size={18} /></Tool>
            <Tool $ml={16}><ColsIcon /></Tool>
            <Tool $ml={18}><ColOp plus /></Tool>
            <Tool $ml={16}><ColOp /></Tool>
            <Tool $ml={35}><Fx>f(x)</Fx></Tool>
            <Tool $ml={39}><FaFileImport size={22} /></Tool>
            <Tool $ml={14}><FaFileExport size={22} /></Tool>
          </TableTools>
          <Sash $h={2} />
          <Grid>
            <Corner><svg width="14" height="24" viewBox="0 0 14 24"><path d="M14 0 V24 H0 Z" fill="#c8c8c8" /></svg></Corner>
            <Th $pad={7} $gap={8}><FaSitemap size={14} /><FaLock size={12} style={{ marginLeft: 3 }} /><span>shared name</span></Th>
            <Th $pad={6} $gap={11}><FaLock size={12} /><span>name</span></Th>
            <Th $pad={7} $gap={12}><FaSitemap size={14} /><span>class</span></Th>
            <Th $pad={7} $gap={12}><FaSitemap size={14} /><span>type</span></Th>
            <Th $pad={7} $gap={11}><FaSitemap size={14} /><span>log2fc</span></Th>
            <Th $pad={7} $gap={0} />
            <RowHead />
            <Td $sans>BN0034</Td>
            <Td $pad={7}>BN0034</Td>
            <Td $pad={8}>meta</Td>
            <Td $pad={7}>up</Td>
            <Td $pad={8}>1.12604935442701</Td>
            <Td />
            <Filler />
          </Grid>
        </Right>
      </Main>
      <BottomBar>
        <CmdLine><TermIcon />Command Line</CmdLine>
        <BottomTab $ml="auto" $w={110} $active><TableGlyph kind="node" />Node Table</BottomTab>
        <BottomTab $w={110}><TableGlyph kind="edge" />Edge Table</BottomTab>
        <BottomTab $w={130}><TableGlyph kind="net" />Network Table</BottomTab>
      </BottomBar>
      <StatusBar>
        <StatusBtn><FaCloud size={16} color="#000" /></StatusBtn>
        <StatusBtn><FaMinusCircle size={14} color="#c72a12" /></StatusBtn>
        <StatusBtn $auto $w={48}><Chip /></StatusBtn>
      </StatusBar>
      <Menu>
        <MenuItem>Export as Network...</MenuItem>
        <MenuItem $sel>Export as Image...</MenuItem>
      </Menu>
      <RedBox $l={942} $t={644} $w={55} $h={56} $b={5} />
      <RedBox $l={937} $t={714} $w={265} $h={43} $b={6} />
      <Badge $l={1015} $t={660}>1</Badge>
      <Badge $l={1204} $t={733}>2</Badge>
    </Win>
  );
}
